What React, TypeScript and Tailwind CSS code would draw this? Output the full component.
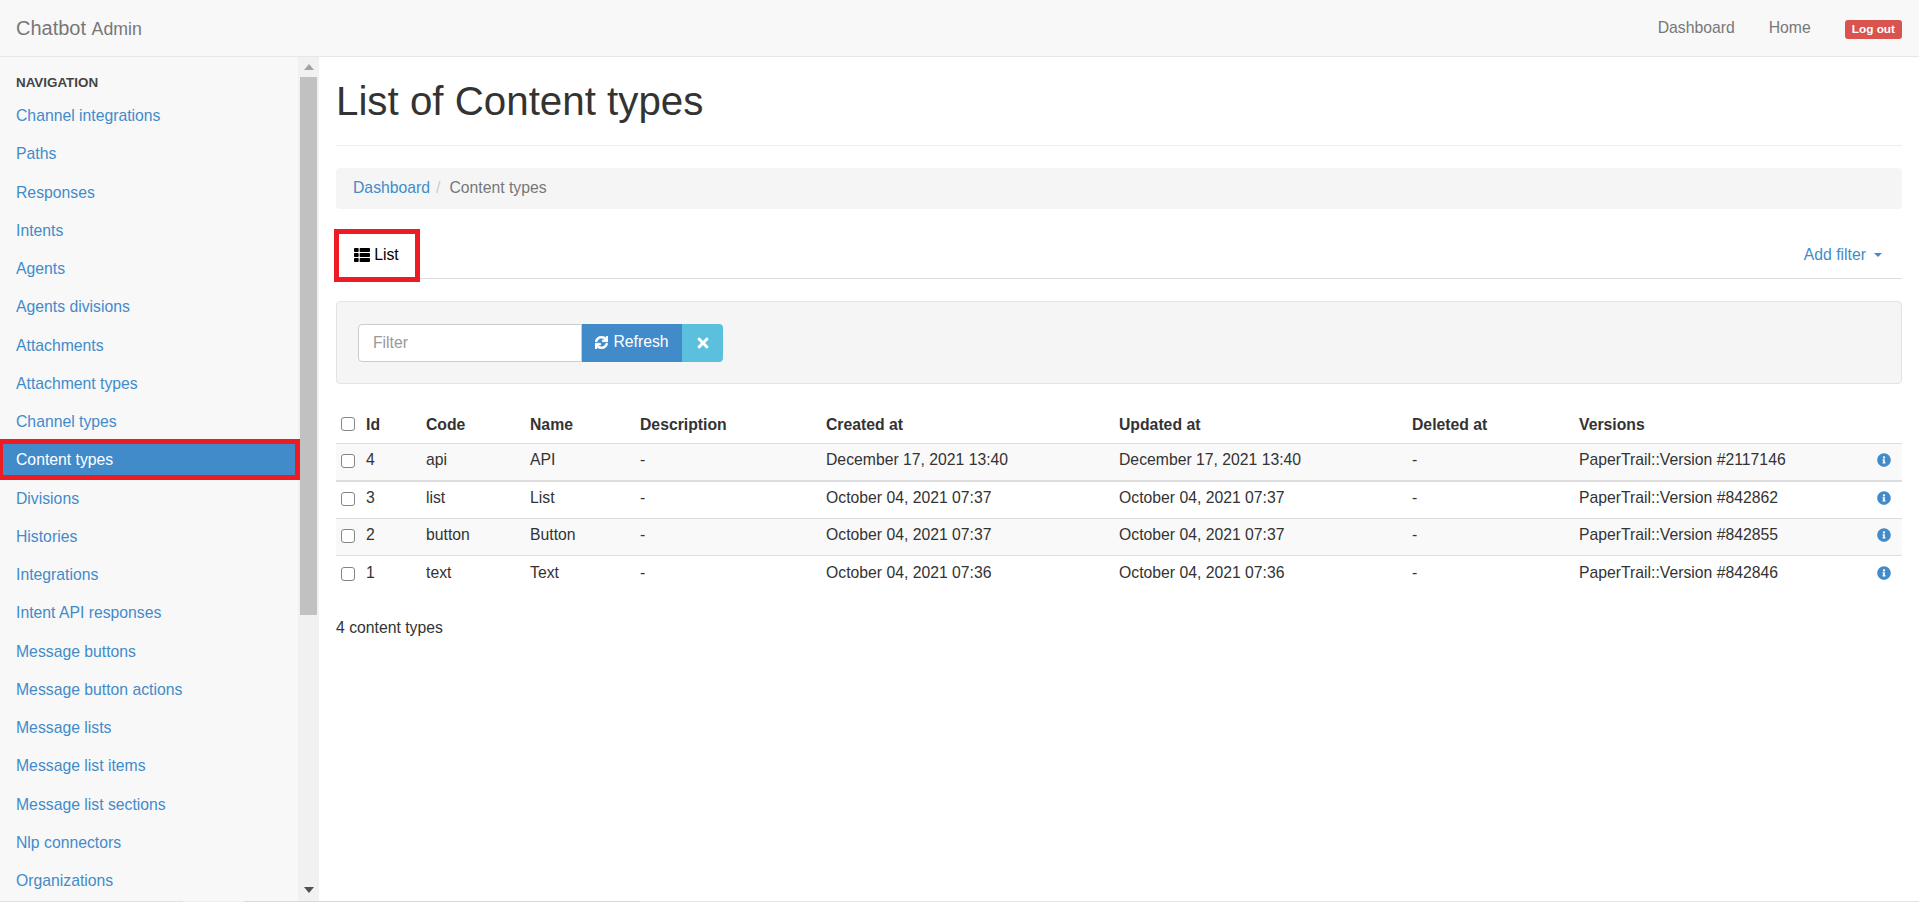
import type { FC } from 'react';
import { FaThList, FaSync, FaTimes, FaInfoCircle } from 'react-icons/fa';

const navItems = [
  'Channel integrations',
  'Paths',
  'Responses',
  'Intents',
  'Agents',
  'Agents divisions',
  'Attachments',
  'Attachment types',
  'Channel types',
  'Content types',
  'Divisions',
  'Histories',
  'Integrations',
  'Intent API responses',
  'Message buttons',
  'Message button actions',
  'Message lists',
  'Message list items',
  'Message list sections',
  'Nlp connectors',
  'Organizations',
];

const rows = [
  { id: 4, code: 'api', name: 'API', created: 'December 17, 2021 13:40', updated: 'December 17, 2021 13:40', version: '2117146' },
  { id: 3, code: 'list', name: 'List', created: 'October 04, 2021 07:37', updated: 'October 04, 2021 07:37', version: '842862' },
  { id: 2, code: 'button', name: 'Button', created: 'October 04, 2021 07:37', updated: 'October 04, 2021 07:37', version: '842855' },
  { id: 1, code: 'text', name: 'Text', created: 'October 04, 2021 07:36', updated: 'October 04, 2021 07:36', version: '842846' },
];

const Checkbox: FC = () => (
  <span className="block h-[14px] w-[14px] rounded-[3px] border border-[#858585] bg-white" />
);

const Sidebar: FC = () => (
  <aside className="flex h-[844px] w-[319px] shrink-0 overflow-hidden">
    <nav className="w-[298px] bg-[#f8f8f8] pt-[16px]">
      <div className="mb-[3px] px-4 text-[13.4px] font-bold uppercase leading-[20px] text-[#444]">Navigation</div>
      {navItems.map((item) => {
        const active = item === 'Content types';
        return (
          <div key={item} className="relative h-[38.25px]">
            <a
              className={`block h-full px-4 leading-[40px] ${active ? 'bg-[#428bca] text-white' : 'text-[#428bca]'}`}
            >
              {item}
            </a>
            {active && <div className="absolute -bottom-[1px] -top-[1px] left-0 -right-[2px] border-y-[5px] border-l-[3px] border-r-[5px] border-[#ed1c24]" />}
          </div>
        );
      })}
    </nav>
    <div className="flex w-[21px] flex-col items-center bg-[#f1f1f1]">
      <svg viewBox="0 0 10 6" className="mt-[7px] h-[6px] w-[10px] fill-[#a3a3a3]">
        <path d="M5 0l5 6H0z" />
      </svg>
      <div className="mt-[7px] h-[538px] w-[17px] bg-[#c1c1c1]" />
      <div className="flex-1" />
      <svg viewBox="0 0 10 6" className="mb-[8px] h-[6px] w-[10px] fill-[#505050]">
        <path d="M0 0h10L5 6z" />
      </svg>
    </div>
  </aside>
);

const ContentTypesTable: FC = () => (
  <table className="w-full border-collapse text-[15.75px] leading-[22px] text-[#333]">
    <thead>
      <tr className="h-[40px] border-b border-[#ddd] text-left font-bold">
        <th className="w-[30px] pl-[5px] pt-[2px] font-normal"><Checkbox /></th>
        <th className="w-[60px] pt-[4px] font-bold">Id</th>
        <th className="w-[104px] pt-[4px] font-bold">Code</th>
        <th className="w-[110px] pt-[4px] font-bold">Name</th>
        <th className="w-[186px] pt-[4px] font-bold">Description</th>
        <th className="w-[293px] pt-[4px] font-bold">Created at</th>
        <th className="w-[293px] pt-[4px] font-bold">Updated at</th>
        <th className="w-[167px] pt-[4px] font-bold">Deleted at</th>
        <th className="pt-[4px] font-bold">Versions</th>
        <th className="w-[30px]" />
      </tr>
    </thead>
    <tbody>
      {rows.map((row, i) => (
        <tr key={row.id} className={`h-[37.5px] ${i === 0 ? 'border-b-2' : 'border-b'} border-[#ddd] last:border-b-0 ${i % 2 === 0 ? 'bg-[#f9f9f9]' : ''}`}>
          <td className="pb-[2px] pl-[5px]"><Checkbox /></td>
          <td className="pb-[3px]">{row.id}</td>
          <td className="pb-[3px]">{row.code}</td>
          <td className="pb-[3px]">{row.name}</td>
          <td className="pb-[3px]">-</td>
          <td className="pb-[3px]">{row.created}</td>
          <td className="pb-[3px]">{row.updated}</td>
          <td className="pb-[3px]">-</td>
          <td className="pb-[3px]">PaperTrail::Version #{row.version}</td>
          <td className="pb-[4px] pl-[5px]">
            <FaInfoCircle className="h-[14px] w-[14px] text-[#428bca]" />
          </td>
        </tr>
      ))}
    </tbody>
  </table>
);

export default function App() {
  return (
    <div className="h-[902px] overflow-hidden bg-white font-['Liberation_Sans',Arial,sans-serif] text-[15.75px] text-[#333]">
      <header className="flex h-[57px] items-center justify-between border-b border-[#e7e7e7] bg-[#f8f8f8] pl-4 pr-[17px]">
        <div className="text-[20px] text-[#777]">
          Chatbot <span className="text-[17.7px]">Admin</span>
        </div>
        <div className="flex items-center text-[#777]">
          <a>Dashboard</a>
          <a className="ml-[34px]">Home</a>
          <span className="ml-[34px] mt-[2px] h-[19px] rounded-[3px] bg-[#d9534f] px-[7px] text-[11.8px] font-bold leading-[19px] text-white">Log out</span>
        </div>
      </header>
      <div className="flex">
        <Sidebar />
        <main className="min-w-0 flex-1 px-[17px]">
          <h1 className="border-b border-[#eee] pb-[21px] pt-[23px] text-[40.3px] leading-[44px] text-[#333]">List of Content types</h1>
          <div className="mt-[22px] flex h-[41px] items-center rounded-[4px] bg-[#f5f5f5] px-[17px] pb-[1px]">
            <a className="text-[#428bca]">Dashboard</a>
            <span className="pl-[6px] pr-[9px] text-[#ccc]">/</span>
            <span className="text-[#777]">Content types</span>
          </div>
          <div className="mt-[20px] flex h-[50px] items-start justify-between border-b border-[#ddd]">
            <div className="relative flex h-[49px] w-[84px] items-center justify-center gap-[4px] pr-[3px] pt-[2px] text-black">
              <FaThList className="h-[16px] w-[16px]" />
              List
              <div className="absolute -left-[2px] top-0 h-[53px] w-[86px] border-[5px] border-[#ed1c24]" />
            </div>
            <a className="flex h-[49px] items-center gap-[8px] pr-[20px] pt-[2px] text-[#428bca]">
              Add filter
              <span className="h-0 w-0 border-x-[4px] border-t-[4px] border-x-transparent border-t-[#428bca]" />
            </a>
          </div>
          <div className="mt-[22px] flex h-[83px] items-center rounded-[4px] border border-[#e3e3e3] bg-[#f5f5f5] pl-[21px]">
            <div className="flex h-[38px] w-[224px] items-center rounded-l-[4px] border border-[#ccc] bg-white px-[14px] text-[#999]">Filter</div>
            <button className="flex h-[38px] w-[100px] items-center justify-center gap-[5px] bg-[#428bca] pb-[1px] text-white">
              <FaSync className="h-[13px] w-[13px]" strokeWidth={30} />
              Refresh
            </button>
            <button className="flex h-[38px] w-[41px] items-center justify-center rounded-r-[4px] bg-[#5bc0de] text-white">
              <FaTimes className="h-[16px] w-[16px]" />
            </button>
          </div>
          <div className="mt-[19px]">
            <ContentTypesTable />
          </div>
          <p className="mt-[24px] leading-[22px]">4 content types</p>
        </main>
      </div>
      <div className="flex h-[1px]">
        <div className="w-[183px] bg-[#e2e6bc]" />
        <div className="w-[61px] bg-[#f0f0e6]" />
        <div className="w-[396px] bg-[#dcdcc0]" />
        <div className="flex-1 bg-[#e6eabc]" />
      </div>
    </div>
  );
}
